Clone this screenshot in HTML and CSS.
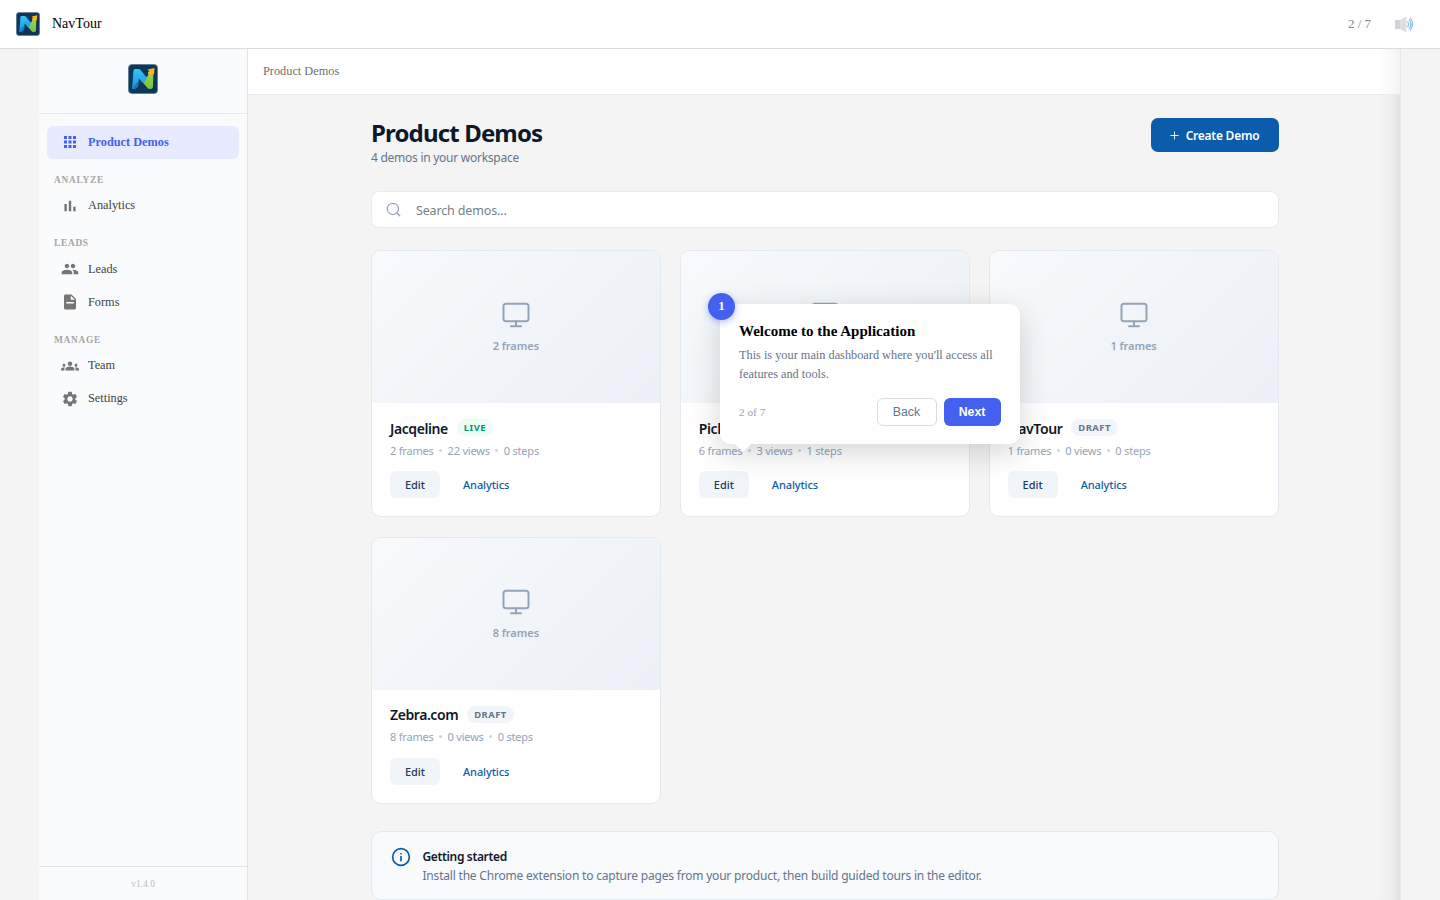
FILE: index.html
```html
<!DOCTYPE html>
<html lang="en">

<head>
    <meta charset="UTF-8">
    <meta name="viewport" content="width=device-width, initial-scale=1.0">
    <title>NavTour</title>
    <link rel="stylesheet" href="styles.css">
</head>

<body>
    <!-- shared icons -->
    <svg class="sprite" width="0" height="0">
        <defs>
            <linearGradient id="logo-blue" x1="0" y1="0" x2="0" y2="1">
                <stop offset="0" stop-color="#35c4f5"></stop>
                <stop offset="1" stop-color="#1493dc"></stop>
            </linearGradient>
            <linearGradient id="logo-green" x1="0" y1="0" x2="0" y2="1">
                <stop offset="0" stop-color="#c9cf35"></stop>
                <stop offset="0.4" stop-color="#8fd03f"></stop>
                <stop offset="1" stop-color="#6cc446"></stop>
            </linearGradient>
        </defs>
        <symbol id="logo" viewBox="0 0 30 30">
            <rect x="0.5" y="0.5" width="29" height="29" rx="3.5" fill="#0f3558" stroke="#5b7893" stroke-width="0.8"></rect>
            <path d="M14 17.500 L20.500 11 L20 8 L25.500 6 L25 23 Q24.500 25 22.500 25 Q20.500 25.500 19 23.500 Z" fill="url(#logo-green)"></path>
            <path d="M19.500 5.500 L26.500 4 L26 10.500 L24 9.500 L21.500 11.500 L20 9.500 L21.500 7.500 Z" fill="#fcb321"></path>
            <path d="M5.500 6.500 Q5.500 5 7 5 L10.500 5 Q11.800 5 12.800 6.300 L19 14 L15.500 19.500 L10.800 14.500 L10 22.500 Q8 25 4 25 Z" fill="url(#logo-blue)"></path>
            <path d="M10.500 17 L10 22.500 Q8 25 4 25 Z" fill="#1079c5"></path>
        </symbol>
        <symbol id="monitor" viewBox="0 0 24 24">
            <rect x="2" y="3" width="20" height="14" rx="2"></rect>
            <path d="M8 21h8M12 17v4"></path>
        </symbol>
    </svg>

    <header class="topbar">
        <svg class="topbar-logo"><use href="#logo"></use></svg>
        <span class="topbar-name">NavTour</span>
        <span class="topbar-step">2 / 7</span>
        <svg class="topbar-sound" viewBox="0 0 20 16">
            <path d="M1 4h5v9H1z" fill="#b6b1bd"></path>
            <path d="M6 4l5.500-3h1v15h-1L6 13z" fill="#cbc7d1"></path>
            <path d="M13.500 5.500q2 2.800 0 5.600M14.800 3.200q4.200 5 0 10M16.200 1.500q4.500 6.500 0 13" fill="none" stroke="#3c96ee" stroke-width="1.200"></path>
        </svg>
    </header>

    <div class="stage">
        <aside class="sidebar">
            <div class="sidebar-logo"><svg><use href="#logo"></use></svg></div>
            <nav class="nav">
                <a class="nav-item active">
                    <svg viewBox="0 0 24 24"><path d="M4 8h4V4H4v4zm6 12h4v-4h-4v4zm-6 0h4v-4H4v4zm0-6h4v-4H4v4zm6 0h4v-4h-4v4zm6-10v4h4V4h-4zm-6 4h4V4h-4v4zm6 6h4v-4h-4v4zm0 6h4v-4h-4v4z"></path></svg>
                    <span>Product Demos</span>
                </a>
                <div class="nav-label">ANALYZE</div>
                <a class="nav-item">
                    <svg viewBox="0 0 24 24"><path d="M4.500 9.200h3.200V19H4.500zM10.400 5h3.200v14h-3.200zM16.300 13h3.200v6h-3.200z"></path></svg>
                    <span>Analytics</span>
                </a>
                <div class="nav-label">LEADS</div>
                <a class="nav-item">
                    <svg viewBox="0 0 24 24"><path d="M16 11c1.660 0 2.990-1.340 2.990-3S17.660 5 16 5s-3 1.340-3 3 1.340 3 3 3zm-8 0c1.660 0 2.990-1.340 2.990-3S9.660 5 8 5 5 6.340 5 8s1.340 3 3 3zm0 2c-2.330 0-7 1.170-7 3.500V19h14v-2.500c0-2.330-4.670-3.500-7-3.500zm8 0c-.29 0-.62.02-.97.05 1.160.84 1.970 1.970 1.970 3.450V19h6v-2.500c0-2.330-4.670-3.500-7-3.500z"></path></svg>
                    <span>Leads</span>
                </a>
                <a class="nav-item">
                    <svg viewBox="0 0 24 24"><path fill-rule="evenodd" d="M14 2H6c-1.100 0-2 .9-2 2v16c0 1.100.9 2 2 2h12c1.100 0 2-.9 2-2V8l-6-6zm3 12H7v-2h10v2zm-4-5V3.500L18.500 9H13z"></path></svg>
                    <span>Forms</span>
                </a>
                <div class="nav-label">MANAGE</div>
                <a class="nav-item">
                    <svg viewBox="0 0 24 24"><path d="M12 12.750c1.630 0 3.070.39 4.240.9 1.080.48 1.760 1.560 1.760 2.730V18H6v-1.610c0-1.180.68-2.260 1.760-2.730 1.170-.52 2.610-.91 4.240-.91zM4 13c1.100 0 2-.9 2-2s-.9-2-2-2-2 .9-2 2 .9 2 2 2zm1.130 1.100C4.760 14.040 4.390 14 4 14c-.99 0-1.930.21-2.780.58C.48 14.900 0 15.620 0 16.430V18h4.500v-1.610c0-.83.23-1.610.63-2.290zM20 13c1.100 0 2-.9 2-2s-.9-2-2-2-2 .9-2 2 .9 2 2 2zm4 3.430c0-.81-.48-1.530-1.220-1.850C21.930 14.210 20.990 14 20 14c-.39 0-.76.04-1.130.1.400.68.63 1.460.63 2.290V18H24v-1.570zM12 6c1.660 0 3 1.340 3 3s-1.340 3-3 3-3-1.340-3-3 1.340-3 3-3z"></path></svg>
                    <span>Team</span>
                </a>
                <a class="nav-item">
                    <svg viewBox="0 0 24 24"><path d="M19.140 12.940c.04-.3.060-.61.060-.94 0-.32-.02-.64-.07-.94l2.030-1.580c.18-.14.23-.41.120-.61l-1.920-3.320c-.12-.22-.37-.29-.59-.22l-2.390.96c-.5-.38-1.030-.7-1.620-.94l-.36-2.540c-.04-.24-.24-.41-.48-.41h-3.840c-.24 0-.43.17-.47.41l-.36 2.540c-.59.24-1.130.57-1.620.94l-2.390-.96c-.22-.08-.47 0-.59.22L2.740 8.870c-.12.21-.08.47.12.61l2.030 1.580c-.05.3-.09.63-.09.94s.02.64.07.94l-2.030 1.580c-.18.14-.23.41-.12.61l1.920 3.320c.12.22.37.29.59.22l2.390-.96c.5.38 1.030.7 1.620.94l.36 2.540c.05.24.24.41.48.41h3.840c.24 0 .44-.17.47-.41l.36-2.540c.59-.24 1.130-.56 1.620-.94l2.390.96c.22.08.47 0 .59-.22l1.920-3.320c.12-.22.07-.47-.12-.61l-2.010-1.580zM12 15.600c-1.980 0-3.600-1.620-3.600-3.600s1.620-3.600 3.600-3.600 3.600 1.620 3.600 3.600-1.620 3.600-3.600 3.600z"></path></svg>
                    <span>Settings</span>
                </a>
            </nav>
            <div class="version">v1.4.0</div>
        </aside>

        <div class="content">
            <div class="breadcrumb">Product Demos</div>
            <main class="main">
                <div class="page-head">
                    <div>
                        <h1>Product Demos</h1>
                        <p>4 demos in your workspace</p>
                    </div>
                    <button class="create"><svg viewBox="0 0 10 10"><path d="M5 0.500v9M0.500 5h9"></path></svg><span>Create Demo</span></button>
                </div>

                <div class="search">
                    <svg viewBox="0 0 24 24"><circle cx="11" cy="11" r="9"></circle><path d="M22 22l-4.500-4.500"></path></svg>
                    <span>Search demos...</span>
                </div>

                <div class="grid">
                    <article class="card">
                        <div class="thumb"><svg><use href="#monitor"></use></svg><span>2 frames</span></div>
                        <div class="card-body">
                            <div class="card-title"><h3>Jacqeline</h3><span class="tag live">LIVE</span></div>
                            <div class="meta"><span>2 frames</span><i></i><span>22 views</span><i></i><span>0 steps</span></div>
                            <div class="actions"><button class="edit">Edit</button><a>Analytics</a></div>
                        </div>
                    </article>
                    <article class="card">
                        <div class="thumb"><svg><use href="#monitor"></use></svg></div>
                        <div class="card-body">
                            <div class="card-title"><h3>Pick</h3></div>
                            <div class="meta"><span>6 frames</span><i></i><span>3 views</span><i></i><span>1 steps</span></div>
                            <div class="actions"><button class="edit">Edit</button><a>Analytics</a></div>
                        </div>
                    </article>
                    <article class="card">
                        <div class="thumb"><svg><use href="#monitor"></use></svg><span>1 frames</span></div>
                        <div class="card-body">
                            <div class="card-title"><h3>NavTour</h3><span class="tag">DRAFT</span></div>
                            <div class="meta"><span>1 frames</span><i></i><span>0 views</span><i></i><span>0 steps</span></div>
                            <div class="actions"><button class="edit">Edit</button><a>Analytics</a></div>
                        </div>
                    </article>
                    <article class="card">
                        <div class="thumb"><svg><use href="#monitor"></use></svg><span>8 frames</span></div>
                        <div class="card-body">
                            <div class="card-title"><h3>Zebra.com</h3><span class="tag">DRAFT</span></div>
                            <div class="meta"><span>8 frames</span><i></i><span>0 views</span><i></i><span>0 steps</span></div>
                            <div class="actions"><button class="edit">Edit</button><a>Analytics</a></div>
                        </div>
                    </article>
                </div>

                <div class="info">
                    <svg viewBox="0 0 24 24"><circle cx="12" cy="12" r="10"></circle><path d="M12 16.500v-5M12 8h.01"></path></svg>
                    <div>
                        <strong>Getting started</strong>
                        <p>Install the Chrome extension to capture pages from your product, then build guided tours in the editor.</p>
                    </div>
                </div>
            </main>
        </div>
    </div>

    <!-- tour step -->
    <div class="popover">
        <div class="popover-badge">1</div>
        <h2>Welcome to the Application</h2>
        <p>This is your main dashboard where you'll access all features and tools.</p>
        <div class="popover-foot">
            <span>2 of 7</span>
            <button class="back">Back</button>
            <button class="next">Next</button>
        </div>
    </div>
</body>

</html>
```

FILE: styles.css
```css
* {
    box-sizing: border-box;
}

body {
    margin: 0;
    height: 900px;
    overflow: hidden;
    background: #f4f4f4;
    font-family: "Liberation Serif", "Times New Roman", serif;
}

h1, h2, h3, p {
    margin: 0;
}

button {
    border: none;
    padding: 0;
    cursor: pointer;
}

.sprite {
    position: absolute;
}

.topbar {
    display: flex;
    align-items: center;
    height: 49px;
    padding: 0 26px 0 16px;
    background: #fff;
    border-bottom: 1px solid #dcdcdc;
}

.topbar-logo {
    width: 24px;
    height: 24px;
}

.topbar-name {
    margin-left: 12px;
    font-size: 14px;
    color: #000;
}

.topbar-step {
    margin-left: auto;
    font-size: 13px;
    color: #888;
}

.topbar-sound {
    width: 20px;
    height: 16px;
    margin-left: 23px;
    opacity: 0.6;
}

.stage {
    display: flex;
    width: 1362px;
    height: 851px;
    margin-left: 39px;
    border-right: 1px solid #e6e8ee;
}

.sidebar {
    display: flex;
    flex-direction: column;
    flex: none;
    width: 209px;
    background: #fafbfd;
    border-right: 1px solid #e2e4e8;
}

.sidebar-logo {
    display: flex;
    justify-content: center;
    height: 65px;
    padding-top: 15px;
    border-bottom: 1px solid #e6e8ea;
}

.sidebar-logo svg {
    width: 30px;
    height: 30px;
}

.nav {
    flex: 1;
    padding: 12px 8px 0;
}

.nav-item {
    display: flex;
    align-items: center;
    height: 32.9px;
    padding-left: 14px;
    border-radius: 6px;
    font-size: 12.3px;
    color: #424242;
}

.nav-item svg {
    width: 18px;
    height: 18px;
    margin-right: 9px;
    fill: #757575;
}

.nav-item.active {
    background: #e8eaff;
    color: #4361ee;
    font-weight: bold;
}

.nav-item.active svg {
    fill: #4361ee;
}

.nav-label {
    height: 30.6px;
    padding: 16px 0 0 7px;
    font-size: 9.4px;
    line-height: 11px;
    font-weight: bold;
    letter-spacing: 0.7px;
    color: #a6a6a6;
}

.version {
    height: 34px;
    border-top: 1px solid #e2e4e8;
    font-size: 9.5px;
    line-height: 34px;
    text-align: center;
    color: #bdbdbd;
}

.content {
    flex: 1;
    background: linear-gradient(to left, rgba(0, 0, 0, 0.065), rgba(0, 0, 0, 0.02) 11px, rgba(0, 0, 0, 0) 23px);
}

.breadcrumb {
    height: 46px;
    padding-left: 15px;
    border-bottom: 1px solid #e8eaf2;
    background: linear-gradient(to left, #f3f3f3, #fbfbfb 11px, #fff 23px);
    font-size: 12.3px;
    line-height: 44px;
    color: #707070;
}

.main {
    width: 907.5px;
    margin-left: 123px;
    padding-top: 23px;
    font-family: "Noto Sans", sans-serif;
}

.page-head {
    display: flex;
    justify-content: space-between;
    align-items: flex-start;
    height: 73px;
}

.page-head h1 {
    font-size: 24px;
    line-height: 30px;
    letter-spacing: -0.85px;
    color: #0b1929;
}

.page-head p {
    font-size: 12px;
    line-height: 20px;
    letter-spacing: -0.26px;
    color: #64748b;
}

.create {
    display: flex;
    align-items: center;
    justify-content: center;
    gap: 7px;
    width: 128px;
    height: 34px;
    border-radius: 7px;
    background: #0b5cab;
    color: #fff;
    font: 600 12px "Noto Sans", sans-serif;
    letter-spacing: -0.25px;
}

.create svg {
    width: 9px;
    height: 9px;
    stroke: #fff;
}

.search {
    display: flex;
    align-items: center;
    height: 36.5px;
    padding-left: 13.5px;
    border: 1px solid #e6eaf2;
    border-radius: 8px;
    background: #fff;
    font-size: 12.5px;
    letter-spacing: -0.15px;
    color: #757f86;
}

.search span {
    padding-top: 2px;
}

.search svg {
    width: 15px;
    height: 15px;
    margin-right: 15.5px;
    fill: none;
    stroke: #94a3b8;
    stroke-width: 2;
    stroke-linecap: round;
}

.grid {
    display: grid;
    grid-template-columns: repeat(3, 1fr);
    gap: 19.5px 19px;
    margin-top: 22.5px;
}

.card {
    height: 267px;
    border: 1px solid #e4e9f1;
    border-radius: 10px;
    background: #fff;
    overflow: hidden;
}

.thumb {
    display: flex;
    flex-direction: column;
    align-items: center;
    height: 152px;
    padding-top: 49px;
    background: linear-gradient(135deg, #f8fafc 0%, #f1f5f9 50%, #eceff5 100%);
    font-size: 11px;
    font-weight: 600;
    line-height: 16px;
    letter-spacing: -0.05px;
    color: #94a3b8;
}

.thumb svg {
    width: 30px;
    height: 30px;
    margin-bottom: 8px;
    fill: none;
    stroke: #94a3b8;
    stroke-width: 1.6;
    stroke-linecap: round;
}

.card-body {
    padding: 15px 18px;
}

.card-title {
    display: flex;
    align-items: center;
    gap: 9px;
    height: 20px;
}

.card-title h3 {
    font-size: 14px;
    font-weight: 600;
    letter-spacing: -0.42px;
    color: #0f172a;
}

.tag {
    margin-top: -1px;
    padding: 0 7px;
    border-radius: 9px;
    background: #f1f5f9;
    font-size: 9.4px;
    font-weight: 700;
    line-height: 17px;
    letter-spacing: 0.5px;
    color: #64748b;
}

.tag.live {
    background: #ecfdf5;
    color: #059669;
}

.meta {
    display: flex;
    align-items: center;
    height: 24px;
    font-size: 11px;
    letter-spacing: -0.2px;
    color: #94a3b8;
}

.meta i {
    width: 3px;
    height: 3px;
    margin: 0 5.5px;
    border-radius: 50%;
    background: #cbd5e1;
}

.actions {
    display: flex;
    align-items: center;
    margin-top: 9px;
    font-size: 11px;
    font-weight: 500;
}

.actions a {
    margin-left: 23px;
    letter-spacing: -0.1px;
    color: #0b5cab;
}

.edit {
    width: 50px;
    height: 27px;
    border-radius: 6px;
    background: #f1f5f9;
    color: #1e3a5a;
    font: 500 11px "Noto Sans", sans-serif;
}

.info {
    display: flex;
    height: 69px;
    margin-top: 27px;
    padding: 15px 18.5px;
    border: 1px solid #e4e9f1;
    border-radius: 10px;
    background: #f8fafc;
}

.info svg {
    width: 20px;
    height: 20px;
    margin-right: 12px;
    fill: none;
    stroke: #0b5cab;
    stroke-width: 2;
    stroke-linecap: round;
}

.info strong {
    display: block;
    font-size: 12px;
    font-weight: 600;
    line-height: 19px;
    letter-spacing: -0.35px;
    color: #0f172a;
}

.info p {
    font-size: 12px;
    line-height: 19px;
    letter-spacing: -0.2px;
    color: #64748b;
}

.popover {
    position: absolute;
    left: 720px;
    top: 304px;
    width: 299.5px;
    height: 140px;
    padding: 18px 19px;
    border-radius: 11px;
    background: #fff;
    box-shadow: 0 8px 30px rgba(0, 0, 0, 0.17);
}

.popover::after {
    content: "";
    position: absolute;
    left: 15px;
    top: 140px;
    border: 8px solid transparent;
    border-top-color: #fff;
    border-bottom: none;
}

.popover-badge {
    position: absolute;
    left: -12px;
    top: -11px;
    width: 27px;
    height: 27px;
    border-radius: 50%;
    background: #4361ee;
    box-shadow: 0 2px 7px rgba(67, 97, 238, 0.45);
    color: #fff;
    font-size: 13px;
    font-weight: bold;
    line-height: 26px;
    text-align: center;
}

.popover h2 {
    font-size: 15px;
    line-height: 19px;
    color: #000;
}

.popover p {
    margin-top: 5px;
    font-size: 12.3px;
    line-height: 19px;
    color: #64748b;
}

.popover-foot {
    display: flex;
    align-items: center;
    margin-top: 14px;
}

.popover-foot span {
    margin-right: auto;
    font-size: 11.3px;
    color: #94a3b8;
}

.popover-foot button {
    height: 27.5px;
    border-radius: 6px;
    font-family: "Liberation Sans", Arial, sans-serif;
    font-size: 12.3px;
}

.back {
    width: 60px;
    border: 1px solid #d9dce3;
    background: #fff;
    color: #64748b;
}

.next {
    width: 57px;
    margin-left: 7px;
    background: #4361ee;
    color: #fff;
    font-weight: bold;
}
```
